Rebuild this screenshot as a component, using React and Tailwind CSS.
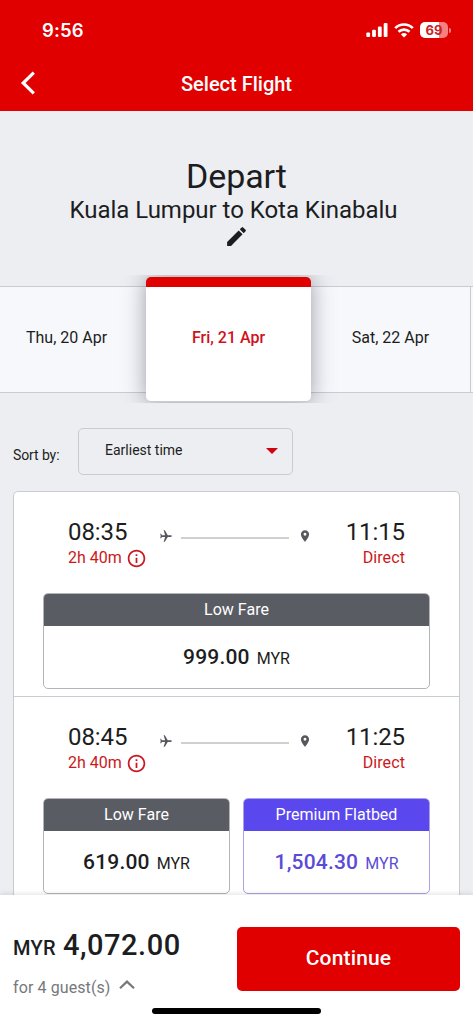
import React from 'react'
import { MdEdit, MdInfoOutline, MdLocalAirport, MdLocationOn } from 'react-icons/md'

const flights = [
  {
    depart: '08:35',
    arrive: '11:15',
    duration: '2h 40m',
    fares: [{ name: 'Low Fare', price: '999.00' }],
  },
  {
    depart: '08:45',
    arrive: '11:25',
    duration: '2h 40m',
    fares: [
      { name: 'Low Fare', price: '619.00' },
      { name: 'Premium Flatbed', price: '1,504.30', premium: true },
    ],
  },
]

function StatusBar() {
  return (
    <div className="flex h-[60px] items-center justify-between pr-[22px] pl-[42px]">
      <span className="font-['Inter',sans-serif] text-[18.5px] leading-none font-semibold tracking-[0.1px]">9:56</span>
      <div className="flex items-center">
        <svg className="mr-[6px] h-[14px] w-[22px]" viewBox="0 0 22 14" fill="currentColor">
          <rect x="0.3" y="9.5" width="3.8" height="4.5" rx="1.1" />
          <rect x="6.1" y="6.7" width="3.8" height="7.3" rx="1.1" />
          <rect x="11.9" y="3.6" width="3.8" height="10.4" rx="1.1" />
          <rect x="17.7" y="0" width="3.8" height="14" rx="1.1" />
        </svg>
        <svg className="mr-[6px] h-[15px] w-5" viewBox="0 0 20 15" fill="none" stroke="currentColor" strokeWidth="2.7">
          <path d="M1.2 5.1a12.6 12.6 0 0 1 17.6 0" />
          <path d="M4.5 8.8a7.9 7.9 0 0 1 11 0" />
          <path d="M10 14.6 6.9 11.5a4.5 4.5 0 0 1 6.2 0z" fill="currentColor" stroke="none" />
        </svg>
        <div className="flex h-4 w-7 items-center justify-center rounded-[5px] bg-linear-to-r from-white from-69% to-[#f58080] to-69%">
          <span className="font-['Inter',sans-serif] text-[13px] leading-none font-bold text-[#c9252b]">69</span>
        </div>
        <span className="ml-px h-[5px] w-[2px] rounded-r-full bg-[#f58080]" />
      </div>
    </div>
  )
}

function Header() {
  return (
    <header className="h-[111px] bg-[#e10000] text-white">
      <StatusBar />
      <div className="grid h-[46px] grid-cols-[60px_1fr_60px] items-center">
        <button className="pl-5" aria-label="Back">
          <svg className="h-6 w-4" viewBox="0 0 16 24" fill="none" stroke="currentColor" strokeWidth="3.2">
            <path d="M13.8 1.6 3.2 12l10.6 10.4" />
          </svg>
        </button>
        <h1 className="pt-px text-center text-[20px] font-medium">Select Flight</h1>
      </div>
    </header>
  )
}

function DateTabs() {
  return (
    <div className="flex h-[128px] items-center overflow-hidden text-[16px]">
      <div className="flex h-[107px] w-[146px] items-center justify-center border-y border-[#c9cbd1] bg-[#f7f8fc] pr-[13px] pb-[3px]">
        Thu, 20 Apr
      </div>
      <div className="relative flex h-[125px] w-[165px] items-center justify-center rounded-[5px] border-t-[10px] border-b border-t-[#e10000] border-b-[#c9cbd1] bg-white pb-[12px] font-medium text-[#d0101a] shadow-[0_0_22px_rgba(60,64,80,0.5)]">
        Fri, 21 Apr
      </div>
      <div className="flex h-[107px] w-[160px] items-center justify-center border-y border-r border-[#c9cbd1] bg-[#f7f8fc] pb-[3px]">
        Sat, 22 Apr
      </div>
      <div className="h-[107px] flex-1 border-y border-[#c9cbd1] bg-[#f7f8fc]" />
    </div>
  )
}

function SortBy() {
  return (
    <div className="flex h-[47px] items-center pl-[13px] text-[14px]">
      <span className="w-[65px] pt-[8px] tracking-[-0.1px] whitespace-nowrap">Sort by:</span>
      <button className="flex h-[47px] w-[215px] items-center justify-between rounded-[5px] border-[1.5px] border-[#c9cbd1] pr-[14px] pb-[2px] pl-[26px]">
        Earliest time
        <svg className="h-[6px] w-3" viewBox="0 0 12 6" fill="#d3000d">
          <path d="M0 0h12L6 6z" />
        </svg>
      </button>
    </div>
  )
}

function Fare({ name, price, premium }) {
  return (
    <div
      className={
        premium
          ? 'flex-1 overflow-hidden rounded-[5px] border-[1.5px] border-[#a9a2e8] text-[#5b4bd6]'
          : 'flex-1 overflow-hidden rounded-[5px] border-[1.5px] border-[#b3b5b9]'
      }
    >
      <div
        className={
          premium
            ? 'flex h-[32px] items-center justify-center bg-[#5a47ee] text-[16px] text-white'
            : 'flex h-[32px] items-center justify-center bg-[#5a5c64] text-[16px] text-white'
        }
      >
        {name}
      </div>
      <div className="flex h-[62px] items-center justify-center pt-[2px]">
        <p className="leading-6">
          <span className="text-[21px] font-medium tracking-[0.2px]">{price}</span>
          <span className="ml-[7px] text-[16px]">MYR</span>
        </p>
      </div>
    </div>
  )
}

function Flight({ flight }) {
  return (
    <li className="h-[205px] border-b border-[#c9cbd1] pt-[26px] pr-[29px] pl-[29px]">
      <div className="flex h-[75px] justify-between pr-[25px] pl-[25px]">
        <div>
          <p className="text-[24px] leading-[28px] tracking-[-0.1px]">{flight.depart}</p>
          <p className="flex items-center text-[16px] leading-[24px] text-[#cb1820]">
            {flight.duration}
            <MdInfoOutline className="ml-1 size-[21px]" />
          </p>
        </div>
        <div className="mt-[11px] mr-auto ml-[12px] flex h-[14px] items-center text-[#55575c]">
          <MdLocalAirport className="size-[14px] rotate-90" />
          <span className="mt-[3px] ml-[8px] h-[2px] w-[108px] bg-[#cfd0d2]" />
          <MdLocationOn className="ml-[9px] size-[14px]" />
        </div>
        <div className="text-right">
          <p className="text-[24px] leading-[28px] tracking-[-0.1px]">{flight.arrive}</p>
          <p className="text-[16px] leading-[24px] tracking-[0.1px] text-[#cb1820]">Direct</p>
        </div>
      </div>
      <div className="flex h-24 gap-[13px]">
        {flight.fares.map((fare) => (
          <Fare key={fare.name} {...fare} />
        ))}
      </div>
    </li>
  )
}

function Footer() {
  return (
    <footer className="relative flex h-[129px] shrink-0 flex-col bg-white shadow-[0_-1px_5px_rgba(0,0,0,0.12)]">
      <div className="flex h-[96px] items-end justify-between px-[13px]">
        <div className="h-[63px]">
          <p className="leading-[34px] font-medium">
            <span className="text-[20px] tracking-[0.3px]">MYR</span>
            <span className="ml-[7px] text-[29px] tracking-[0.55px]">4,072.00</span>
          </p>
          <p className="mt-[9px] flex items-center text-[16px] leading-6 tracking-[0.1px] text-[#76787c]">
            for 4 guest(s)
            <svg className="mb-[7px] ml-[8px] h-[9px] w-4" viewBox="0 0 16 9" fill="none" stroke="currentColor" strokeWidth="2.2">
              <path d="m1 8.2 7-6.6 7 6.6" />
            </svg>
          </p>
        </div>
        <button className="h-[64px] w-[223px] rounded-[5px] bg-[#e10000] text-[21px] font-medium tracking-[0.15px] text-white">
          Continue
        </button>
      </div>
      <div className="mx-auto mt-[17px] h-[6px] w-[169px] rounded-full bg-black" />
    </footer>
  )
}

export default function App() {
  return (
    <div className="flex h-[1024px] w-[473px] flex-col overflow-hidden bg-[#edeef2] font-['Roboto',sans-serif] text-[#1c1d21]">
      <Header />
      <main className="min-h-0 flex-1 overflow-hidden">
        <section className="flex h-[164px] flex-col items-center pt-[45px]">
          <h2 className="text-[34px] leading-10 tracking-[-0.1px]">Depart</h2>
          <p className="pr-[6px] text-[24px] leading-[28px] tracking-[-0.03px]">Kuala Lumpur to Kota Kinabalu</p>
          <MdEdit className="size-[25px]" />
        </section>
        <DateTabs />
        <div className="pt-[25px]">
          <SortBy />
        </div>
        <ul className="mx-[13px] mt-4 rounded-t-[5px] border border-[#c9cbd1] bg-white">
          {flights.map((flight) => (
            <Flight key={flight.depart} flight={flight} />
          ))}
        </ul>
      </main>
      <Footer />
    </div>
  )
}
